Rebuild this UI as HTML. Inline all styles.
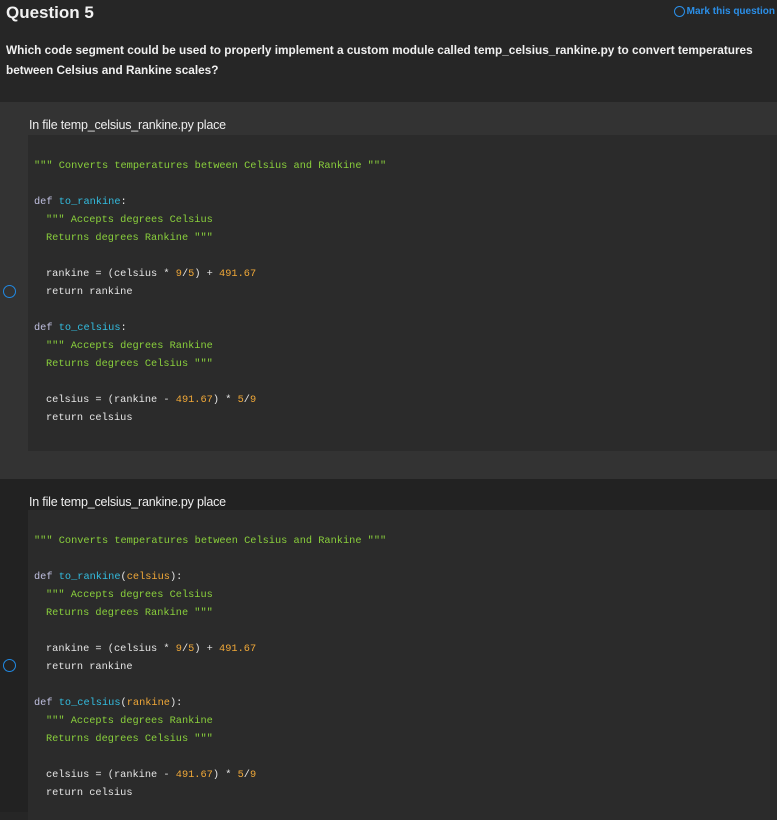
<!DOCTYPE html>
<html><head><meta charset="utf-8"><style>
*{margin:0;padding:0;box-sizing:border-box}
body{width:777px;height:812px;overflow:hidden;background:#262626;font-family:"Liberation Sans",sans-serif;color:#eee;position:relative}
.title{position:absolute;left:6px;top:3px;font-size:17px;font-weight:bold;color:#f2f2f2}
.mark{position:absolute;right:2px;top:6px;font-size:10px;font-weight:bold;color:#2b8fe8;display:flex;align-items:center;gap:2px}
.mark i{display:inline-block;width:11px;height:11px;border:1.5px solid #2b8fe8;border-radius:50%}
.q{position:absolute;left:6px;top:40px;font-size:11.8px;font-weight:bold;line-height:20px;color:#f0f0f0;width:770px}
.opt{position:absolute;left:0;width:777px}
.o1{top:102px;height:377px;background:#333}
.o2{top:479px;height:333px;background:#222}
.hd{position:absolute;left:29px;top:16px;font-size:12.5px;color:#eee;letter-spacing:-0.2px}
.code{position:absolute;left:28px;right:0;background:#2b2b2b;font-family:"Liberation Mono",monospace;font-size:10.3px;line-height:18px;color:#e6e6e6;padding:22px 0 0 6px;white-space:pre}
.o1 .code{top:33px;height:316px}
.o2 .code{top:31px;height:310px}
.code div{height:18px}
.in{padding-left:12px}
.s{color:#8ad03c}.k{color:#c0c0e0}.f{color:#33bde0}.n{color:#f0a838}
.radio{position:absolute;left:3px;width:13px;height:13px;border:1.6px solid #2189e3;border-radius:50%}
</style></head><body>
<div class="title">Question 5</div>
<div class="mark"><i></i>Mark this question</div>
<div class="q">Which code segment could be used to properly implement a custom module called temp_celsius_rankine.py to convert temperatures between Celsius and Rankine scales?</div>
<div class="opt o1">
<div class="hd">In file temp_celsius_rankine.py place</div>
<div class="radio" style="top:183px"></div>
<div class="code"><div class="s">""" Converts temperatures between Celsius and Rankine """</div><div></div><div><span class="k">def</span> <span class="f">to_rankine</span>:</div><div class="in s">""" Accepts degrees Celsius</div><div class="in s">Returns degrees Rankine """</div><div></div><div class="in">rankine = (celsius * <span class="n">9</span>/<span class="n">5</span>) + <span class="n">491.67</span></div><div class="in">return rankine</div><div></div><div><span class="k">def</span> <span class="f">to_celsius</span>:</div><div class="in s">""" Accepts degrees Rankine</div><div class="in s">Returns degrees Celsius """</div><div></div><div class="in">celsius = (rankine - <span class="n">491.67</span>) * <span class="n">5</span>/<span class="n">9</span></div><div class="in">return celsius</div></div>
</div>
<div class="opt o2">
<div class="hd">In file temp_celsius_rankine.py place</div>
<div class="radio" style="top:180px"></div>
<div class="code"><div class="s">""" Converts temperatures between Celsius and Rankine """</div><div></div><div><span class="k">def</span> <span class="f">to_rankine</span>(<span class="n">celsius</span>):</div><div class="in s">""" Accepts degrees Celsius</div><div class="in s">Returns degrees Rankine """</div><div></div><div class="in">rankine = (celsius * <span class="n">9</span>/<span class="n">5</span>) + <span class="n">491.67</span></div><div class="in">return rankine</div><div></div><div><span class="k">def</span> <span class="f">to_celsius</span>(<span class="n">rankine</span>):</div><div class="in s">""" Accepts degrees Rankine</div><div class="in s">Returns degrees Celsius """</div><div></div><div class="in">celsius = (rankine - <span class="n">491.67</span>) * <span class="n">5</span>/<span class="n">9</span></div><div class="in">return celsius</div></div>
</div>
</body></html>
